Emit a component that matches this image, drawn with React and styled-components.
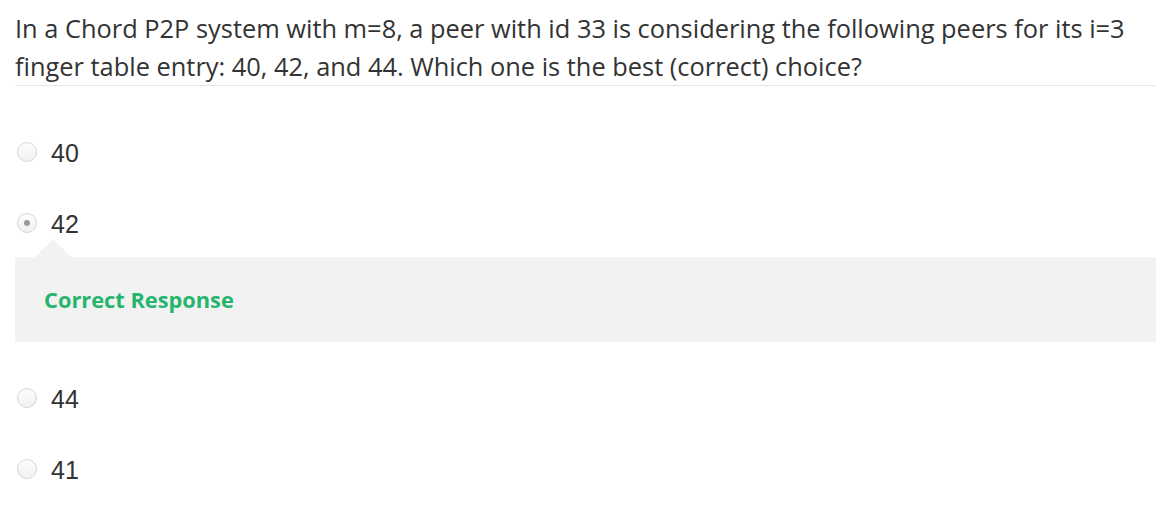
import React from "react";
import styled, { createGlobalStyle } from "styled-components";

const GlobalStyle = createGlobalStyle`
  html, body {
    margin: 0;
    padding: 0;
    background: #fff;
  }
`;

const Page = styled.div`
  padding: 9px 0 0 15px;
`;

const Question = styled.div`
  font-family: "Open Sans", sans-serif;
  font-size: 25.4px;
  line-height: 38px;
  color: #333;
  border-bottom: 1px solid #e6e6e6;
`;

const Options = styled.div`
  margin-top: 30px;
`;

const OptionRow = styled.label`
  display: flex;
  align-items: center;
  height: 71px;
  gap: 14px;
  font-family: "Liberation Sans", Arial, sans-serif;
  font-size: 25px;
  color: #333;
`;

const OptionText = styled.span`
  padding-top: 4px;
`;

const Radio = styled.span`
  box-sizing: border-box;
  width: 20px;
  height: 20px;
  margin-left: 2px;
  border-radius: 50%;
  border: 1px solid #d6d6d6;
  background: linear-gradient(#fdfdfd, #f1f1f1);
  display: flex;
  align-items: center;
  justify-content: center;

  &::after {
    content: "";
    width: 6px;
    height: 6px;
    border-radius: 50%;
    background: ${p => (p.checked ? "#9a9a9a" : "transparent")};
  }
`;

const Feedback = styled.div`
  position: relative;
  background: #f2f2f2;
  height: 85px;
  display: flex;
  align-items: center;
  padding-left: 29px;
  margin-top: -1px;
  margin-bottom: 20px;
  font-family: "Open Sans", sans-serif;
  font-weight: 700;
  font-size: 21.8px;
  color: #27b56e;

  &::before {
    content: "";
    position: absolute;
    top: -18px;
    left: 20px;
    border-left: 18px solid transparent;
    border-right: 18px solid transparent;
    border-bottom: 18px solid #f2f2f2;
  }
`;

const options = [
  { value: "40" },
  { value: "42", checked: true, feedback: "Correct Response" },
  { value: "44" },
  { value: "41" },
];

export default function App() {
  return (
    <Page>
      <GlobalStyle />
      <Question>
        In a Chord P2P system with m=8, a peer with id 33 is considering the
        following peers for its i=3 finger table entry: 40, 42, and 44. Which
        one is the best (correct) choice?
      </Question>
      <Options>
        {options.map(o => (
          <React.Fragment key={o.value}>
            <OptionRow>
              <Radio checked={o.checked} />
              <OptionText>{o.value}</OptionText>
            </OptionRow>
            {o.feedback && <Feedback>{o.feedback}</Feedback>}
          </React.Fragment>
        ))}
      </Options>
    </Page>
  );
}
